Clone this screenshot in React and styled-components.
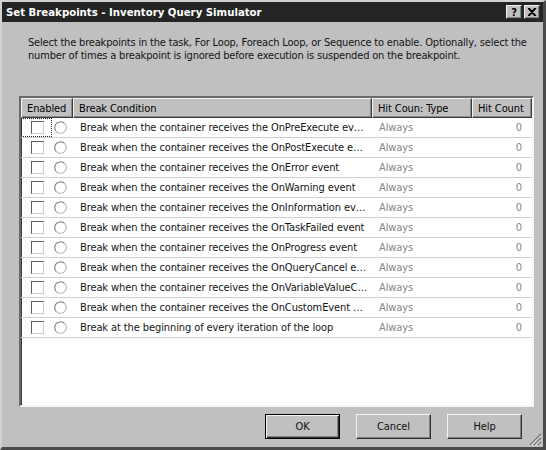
import React from "react";
import styled, { createGlobalStyle } from "styled-components";

const GlobalStyle = createGlobalStyle`
  html, body {
    margin: 0;
    padding: 0;
    background: #c0c0c0;
  }
  * {
    box-sizing: border-box;
  }
`;

const FONT = `"DejaVu Sans Condensed", "DejaVu Sans", "Liberation Sans", sans-serif`;

const rows = [
  "Break when the container receives the OnPreExecute ev…",
  "Break when the container receives the OnPostExecute e…",
  "Break when the container receives the OnError event",
  "Break when the container receives the OnWarning event",
  "Break when the container receives the OnInformation ev…",
  "Break when the container receives the OnTaskFailed event",
  "Break when the container receives the OnProgress event",
  "Break when the container receives the OnQueryCancel e…",
  "Break when the container receives the OnVariableValueC…",
  "Break when the container receives the OnCustomEvent …",
  "Break at the beginning of every iteration of the loop",
];

const App = () => {
  return (
    <>
      <GlobalStyle />
      <Window>
        <TitleBar>
          <Title>Set Breakpoints - Inventory Query Simulator</Title>
          <CaptionButtons>
            <CaptionButton>?</CaptionButton>
            <CaptionButton>
              <svg width="9" height="8" viewBox="0 0 9 8">
                <path d="M1 0 L8 8 M0 0 L7 8 M7 0 L0 8 M8 0 L1 8" stroke="#000" strokeWidth="1.2" />
              </svg>
            </CaptionButton>
          </CaptionButtons>
        </TitleBar>

        <Body>
          <Intro>
            Select the breakpoints in the task, For Loop, Foreach Loop, or Sequence to enable. Optionally, select the
            <br />
            number of times a breakpoint is ignored before execution is suspended on the breakpoint.
          </Intro>

          <ListBox>
            <HeaderRow>
              <HeaderCell>Enabled</HeaderCell>
              <HeaderCell>Break Condition</HeaderCell>
              <HeaderCell>Hit Coun: Type</HeaderCell>
              <HeaderCell>Hit Count</HeaderCell>
            </HeaderRow>
            {rows.map((text, i) => (
              <Row key={i}>
                <EnabledCell>
                  <CheckSlot $focused={i === 0}>
                    <CheckBox />
                  </CheckSlot>
                  <Radio width="13" height="13" viewBox="0 0 13 13">
                    <path d="M10.6 2.4 A5.5 5.5 0 0 0 2.4 10.6" fill="none" stroke="#7a7a7a" strokeWidth="1.1" />
                    <path d="M2.4 10.6 A5.5 5.5 0 0 0 10.6 2.4" fill="none" stroke="#b4b4b4" strokeWidth="1.1" />
                  </Radio>
                </EnabledCell>
                <Cell>{text}</Cell>
                <Cell $muted>Always</Cell>
                <Cell $muted $right>0</Cell>
              </Row>
            ))}
          </ListBox>

          <Footer>
            <Button $primary>OK</Button>
            <Button>Cancel</Button>
            <Button>Help</Button>
          </Footer>
        </Body>

        <Grip width="13" height="13" viewBox="0 0 13 13">
          <path d="M12 1 L1 12 M12 5 L5 12 M12 9 L9 12" stroke="#6e6e6e" strokeWidth="1.3" />
          <path d="M12 2.5 L2.5 12 M12 6.5 L6.5 12 M12 10.5 L10.5 12" stroke="#f0f0f0" strokeWidth="0.9" />
        </Grip>
      </Window>
    </>
  );
};

export default App;

const Window = styled.div`
  position: relative;
  width: 546px;
  height: 450px;
  display: flex;
  flex-direction: column;
  background: #c0c0c0;
  border-style: solid;
  border-width: 2px 3px 3px 2px;
  border-color: #d2d2d2 #4a4a4a #4a4a4a #d2d2d2;
  font-family: ${FONT};
  font-size: 11px;
  letter-spacing: -0.1px;
  color: #111;
`;

const TitleBar = styled.div`
  height: 20px;
  flex: none;
  display: flex;
  align-items: center;
  justify-content: space-between;
  padding: 0 3px 0 4px;
  background: #242424;
`;

const Title = styled.div`
  color: #fff;
  font-weight: bold;
  font-size: 11.3px;
  letter-spacing: 0;
  white-space: nowrap;
`;

const CaptionButtons = styled.div`
  display: flex;
  gap: 2px;
`;

const CaptionButton = styled.div`
  width: 16px;
  height: 14px;
  display: flex;
  align-items: center;
  justify-content: center;
  background: #c0c0c0;
  border-style: solid;
  border-width: 1px;
  border-color: #f4f4f4 #303030 #303030 #f4f4f4;
  box-shadow: inset -1px -1px 0 #808080;
  font-weight: bold;
  font-size: 11px;
  color: #000;
  line-height: 1;
`;

const Body = styled.div`
  flex: 1;
  display: flex;
  flex-direction: column;
  padding: 14px 0 0 17px;
`;

const Intro = styled.p`
  margin: 0 0 34px 9px;
  line-height: 13px;
  letter-spacing: -0.18px;
  white-space: nowrap;
  color: #141414;
`;

const ListBox = styled.div`
  width: 515px;
  height: 311px;
  background: #fff;
  border-style: solid;
  border-width: 2px;
  border-color: #6a6a6a #f4f4f4 #f4f4f4 #6a6a6a;
  box-shadow: inset 1px 1px 0 #3a3a3a;
  overflow: hidden;
`;

const Columns = styled.div`
  display: grid;
  grid-template-columns: 52px 299px 100px 60px;
`;

const HeaderRow = styled(Columns)`
  height: 20px;
  background: #c0c0c0;
`;

const HeaderCell = styled.div`
  display: flex;
  align-items: center;
  padding-left: 5px;
  border-style: solid;
  border-width: 1px;
  border-color: #f2f2f2 #3c3c3c #3c3c3c #f2f2f2;
  box-shadow: inset -1px -1px 0 #8a8a8a;
  color: #000;
  white-space: nowrap;
`;

const Row = styled(Columns)`
  height: 20px;
  border-bottom: 1px solid #cfcfcf;
`;

const EnabledCell = styled.div`
  display: flex;
  align-items: center;
`;

const CheckSlot = styled.div`
  width: 31px;
  height: 19px;
  display: flex;
  align-items: center;
  justify-content: center;
  padding-left: 2px;
  border: 1px dotted ${(p) => (p.$focused ? "#222" : "transparent")};
`;

const CheckBox = styled.div`
  width: 13px;
  height: 13px;
  border-style: solid;
  border-width: 1px;
  border-color: #5e5e5e #c9c9c9 #c9c9c9 #5e5e5e;
  background: #fff;
`;

const Radio = styled.svg`
  margin-left: 2px;
  flex: none;
`;

const Cell = styled.div`
  display: flex;
  align-items: center;
  justify-content: ${(p) => (p.$right ? "flex-end" : "flex-start")};
  padding: ${(p) => (p.$right ? "0 10px 0 0" : "0 0 0 7px")};
  color: ${(p) => (p.$muted ? "#858585" : "#141414")};
  white-space: nowrap;
  overflow: hidden;
`;

const Footer = styled.div`
  display: flex;
  justify-content: flex-end;
  gap: 16px;
  margin-top: 7px;
  padding-right: 21px;
`;

const Button = styled.div`
  width: 75px;
  height: 25px;
  display: flex;
  align-items: center;
  justify-content: center;
  background: #c0c0c0;
  color: #111;
  border-style: solid;
  border-width: 1px;
  border-color: ${(p) => (p.$primary ? "#000" : "#f4f4f4 #303030 #303030 #f4f4f4")};
  box-shadow: ${(p) =>
    p.$primary
      ? "inset 1px 1px 0 #f4f4f4, inset -1px -1px 0 #303030, inset -2px -2px 0 #808080"
      : "inset -1px -1px 0 #808080"};
`;

const Grip = styled.svg`
  position: absolute;
  right: 1px;
  bottom: 1px;
`;
